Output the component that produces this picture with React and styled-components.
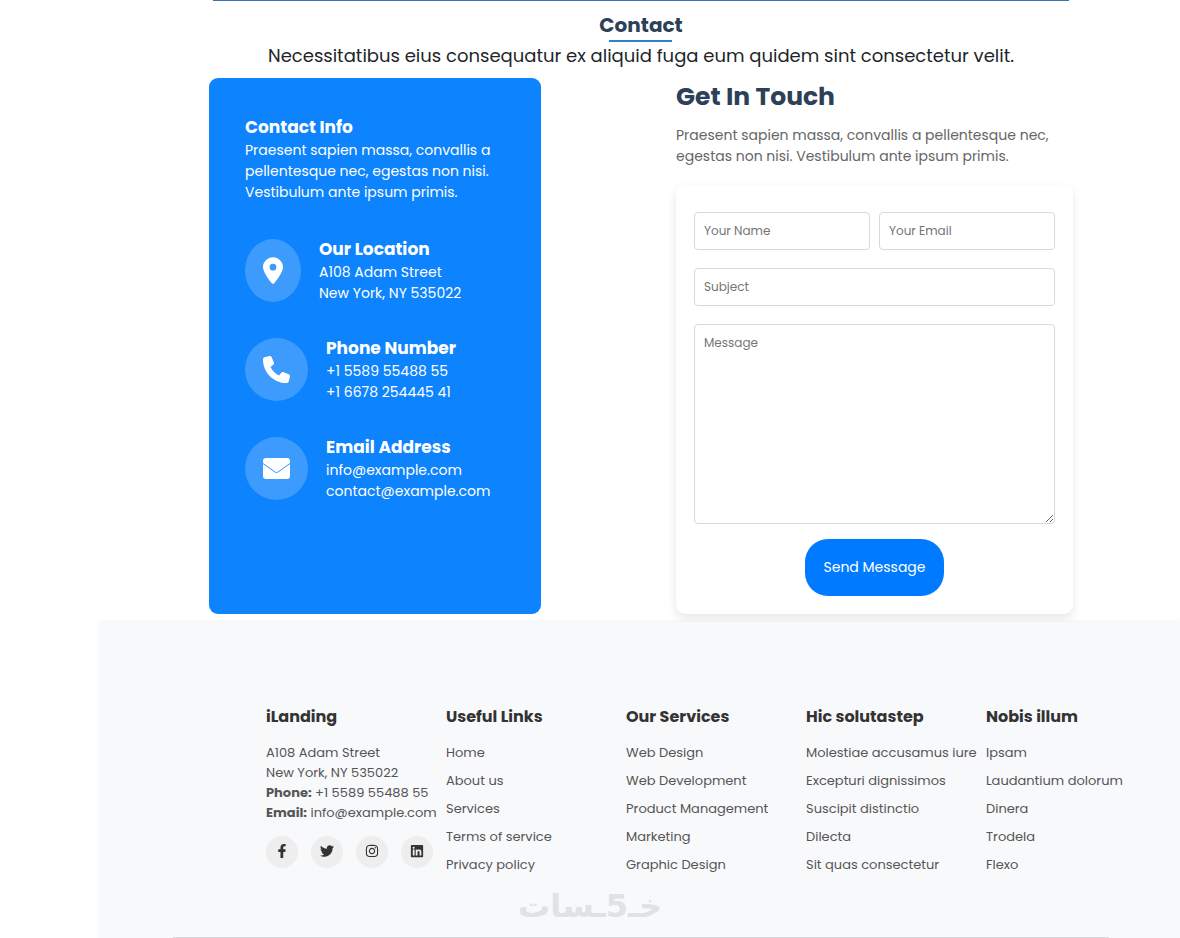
import React from 'react';
import styled, { createGlobalStyle } from 'styled-components';
import { FaLocationDot, FaPhone } from 'react-icons/fa6';
import { FaFacebookF, FaTwitter, FaInstagram, FaLinkedin } from 'react-icons/fa';

const GlobalStyle = createGlobalStyle`
  * {
    box-sizing: border-box;
    margin: 0;
    padding: 0;
  }

  body {
    background: #fff;
    color: #212529;
    font-family: Poppins, Inter, sans-serif;
    font-size: 14px;
    line-height: 21px;
  }

  input, textarea, button {
    font-family: inherit;
  }
`;

const Page = styled.div`
  position: relative;
  padding-left: 100px;
  overflow: hidden;
`;

const Main = styled.main`
  max-width: 866px;
  margin: 0 auto;
  padding-left: 2px;
`;

const SectionEdge = styled.div`
  height: 1px;
  margin: 0 4px;
  background: #3a74ad;
`;

const SectionHeader = styled.header`
  display: flex;
  flex-direction: column;
  align-items: center;
  padding: 9px 0;
`;

const SectionTitle = styled.h2`
  color: #2c4157;
  font-size: 20px;
  line-height: 30px;
  font-weight: 700;

  &::after {
    content: '';
    display: block;
    width: 63px;
    height: 2px;
    margin: 0 auto;
    background: #2f80d0;
  }
`;

const SectionText = styled.p`
  font-size: 18px;
  line-height: 27px;
`;

const Columns = styled.div`
  display: flex;
  justify-content: space-between;
`;

const InfoCard = styled.section`
  flex: 0 1 332px;
  padding: 36px;
  background: #0d83fd;
  border-radius: 9px;
  color: #fff;
`;

const CardTitle = styled.h3`
  font-size: 17px;
  line-height: 26px;
  font-weight: 700;
`;

const InfoList = styled.div`
  display: flex;
  flex-direction: column;
  gap: 31px;
  margin-top: 33px;
`;

const InfoItem = styled.div`
  display: flex;
  align-items: center;
  gap: 18px;
`;

const IconCircle = styled.div`
  display: flex;
  padding: 18px;
  border-radius: 50%;
  background: rgba(255, 255, 255, 0.2);

  svg {
    width: ${({ $iconWidth }) => $iconWidth}px;
    height: 27px;
  }
`;

const FormColumn = styled.section`
  flex: 0 1 397px;
`;

const FormTitle = styled.h2`
  color: #2c4157;
  font-size: 25px;
  line-height: 38px;
  font-weight: 700;
`;

const FormText = styled.p`
  margin: 9px 0 18px;
  color: #666;
`;

const Form = styled.form`
  display: grid;
  grid-template-columns: 1fr 1fr;
  gap: 18px 9px;
  padding: 27px 18px 18px;
  border-radius: 9px;
  background: #fff;
  box-shadow: 0 4px 10px rgba(0, 0, 0, 0.1);
`;

const Input = styled.input`
  grid-column: ${({ $wide }) => ($wide ? '1 / -1' : 'auto')};
  width: 100%;
  height: 38px;
  padding: 9px;
  border: 1px solid #d8d8d8;
  border-radius: 4px;
  font-size: 12px;
  line-height: 18px;

  &::placeholder {
    color: #757575;
  }
`;

const Message = styled(Input)`
  height: 200px;
  resize: vertical;
`;

const SubmitButton = styled.button`
  grid-column: 1 / -1;
  justify-self: center;
  margin-top: -3px;
  padding: 18px;
  border: 0;
  border-radius: 23px;
  background: #007bff;
  color: #fff;
  font-size: 14px;
  line-height: 21px;
`;

const Footer = styled.footer`
  position: relative;
  margin-top: 8px;
  padding-top: 83px;
  background: #f8f9fb;
  box-shadow: 0 0 5px rgba(0, 0, 0, 0.08);
  color: #555;
  font-size: 13px;
  line-height: 20px;
`;

const FooterColumns = styled.div`
  display: grid;
  grid-template-columns: repeat(5, 1fr);
  padding: 0 14px 62px 166px;
  white-space: nowrap;
`;

const FooterTitle = styled.h4`
  margin-bottom: 14px;
  color: #333;
  font-size: 16px;
  line-height: 24px;
  font-weight: 700;
`;

const LinkList = styled.ul`
  display: flex;
  flex-direction: column;
  gap: 8px;
  list-style: none;
`;

const FooterLink = styled.a`
  color: inherit;
  text-decoration: none;
`;

const Address = styled.address`
  font-style: normal;
`;

const Socials = styled.div`
  display: flex;
  gap: 13px;
  margin-top: 13px;
`;

const SocialLink = styled.a`
  display: flex;
  align-items: center;
  justify-content: center;
  width: 32px;
  height: 32px;
  padding-bottom: 2px;
  border-radius: 50%;
  background: #eee;
  color: #333;
  font-size: 14px;
`;

const Divider = styled.hr`
  height: 1px;
  margin: 0 71px 0 73px;
  border: 0;
  background: #d9dadc;
`;

// stamped over the page, centred on the window
const Watermark = styled.div`
  position: absolute;
  right: 0;
  bottom: 8px;
  left: 0;
  color: #e1e2e4;
  font-family: 'DejaVu Sans', sans-serif;
  font-size: 32px;
  line-height: 48px;
  font-weight: 700;
  text-align: center;
  pointer-events: none;
`;

const EnvelopeIcon = () => (
  <svg viewBox="0 0 27 27" aria-hidden="true">
    <rect x="0" y="3" width="27" height="21" rx="3" fill="#fff" />
    <path d="M0 8.5 L12.4 17.3 Q13.5 18 14.6 17.3 L27 8.5" fill="none" stroke="#2b92fd" strokeWidth="1" />
  </svg>
);

const contacts = [
  {
    title: 'Our Location',
    lines: ['A108 Adam Street', 'New York, NY 535022'],
    icon: <FaLocationDot />,
    iconWidth: 20,
  },
  {
    title: 'Phone Number',
    lines: ['+1 5589 55488 55', '+1 6678 254445 41'],
    icon: <FaPhone />,
    iconWidth: 27,
  },
  {
    title: 'Email Address',
    lines: ['info@example.com', 'contact@example.com'],
    icon: <EnvelopeIcon />,
    iconWidth: 27,
  },
];

const linkGroups = [
  {
    title: 'Useful Links',
    links: ['Home', 'About us', 'Services', 'Terms of service', 'Privacy policy'],
  },
  {
    title: 'Our Services',
    links: ['Web Design', 'Web Development', 'Product Management', 'Marketing', 'Graphic Design'],
  },
  {
    title: 'Hic solutastep',
    links: [
      'Molestiae accusamus iure',
      'Excepturi dignissimos',
      'Suscipit distinctio',
      'Dilecta',
      'Sit quas consectetur',
    ],
  },
  {
    title: 'Nobis illum',
    links: ['Ipsam', 'Laudantium dolorum', 'Dinera', 'Trodela', 'Flexo'],
  },
];

const socials = [
  { name: 'Facebook', icon: <FaFacebookF /> },
  { name: 'Twitter', icon: <FaTwitter /> },
  { name: 'Instagram', icon: <FaInstagram /> },
  { name: 'LinkedIn', icon: <FaLinkedin /> },
];

const ContactInfo = () => (
  <InfoCard>
    <CardTitle>Contact Info</CardTitle>
    <p>
      Praesent sapien massa, convallis a pellentesque nec, egestas non nisi.
      Vestibulum ante ipsum primis.
    </p>
    <InfoList>
      {contacts.map(({ title, lines, icon, iconWidth }) => (
        <InfoItem key={title}>
          <IconCircle $iconWidth={iconWidth}>{icon}</IconCircle>
          <div>
            <CardTitle>{title}</CardTitle>
            {lines.map(line => <p key={line}>{line}</p>)}
          </div>
        </InfoItem>
      ))}
    </InfoList>
  </InfoCard>
);

const ContactForm = () => (
  <FormColumn>
    <FormTitle>Get In Touch</FormTitle>
    <FormText>
      Praesent sapien massa, convallis a pellentesque nec, egestas non nisi.
      Vestibulum ante ipsum primis.
    </FormText>
    <Form onSubmit={e => e.preventDefault()}>
      <Input type="text" placeholder="Your Name" aria-label="Your Name" />
      <Input type="email" placeholder="Your Email" aria-label="Your Email" />
      <Input $wide type="text" placeholder="Subject" aria-label="Subject" />
      <Message as="textarea" $wide placeholder="Message" aria-label="Message" />
      <SubmitButton type="submit">Send Message</SubmitButton>
    </Form>
  </FormColumn>
);

const SiteFooter = () => (
  <Footer>
    <FooterColumns>
      <div>
        <FooterTitle>iLanding</FooterTitle>
        <Address>
          <p>A108 Adam Street</p>
          <p>New York, NY 535022</p>
          <p><strong>Phone:</strong> +1 5589 55488 55</p>
          <p><strong>Email:</strong> info@example.com</p>
        </Address>
        <Socials>
          {socials.map(({ name, icon }) => (
            <SocialLink key={name} href="#" aria-label={name}>{icon}</SocialLink>
          ))}
        </Socials>
      </div>
      {linkGroups.map(({ title, links }) => (
        <div key={title}>
          <FooterTitle>{title}</FooterTitle>
          <LinkList>
            {links.map(link => (
              <li key={link}><FooterLink href="#">{link}</FooterLink></li>
            ))}
          </LinkList>
        </div>
      ))}
    </FooterColumns>
    <Divider />
  </Footer>
);

const App = () => (
  <>
    <GlobalStyle />
    <Page>
      <Main>
        <SectionEdge />
        <SectionHeader>
          <SectionTitle>Contact</SectionTitle>
          <SectionText>
            Necessitatibus eius consequatur ex aliquid fuga eum quidem sint consectetur velit.
          </SectionText>
        </SectionHeader>
        <Columns>
          <ContactInfo />
          <ContactForm />
        </Columns>
      </Main>
      <SiteFooter />
      <Watermark lang="ar" dir="rtl">خـ5ـسات</Watermark>
    </Page>
  </>
);

export default App;
